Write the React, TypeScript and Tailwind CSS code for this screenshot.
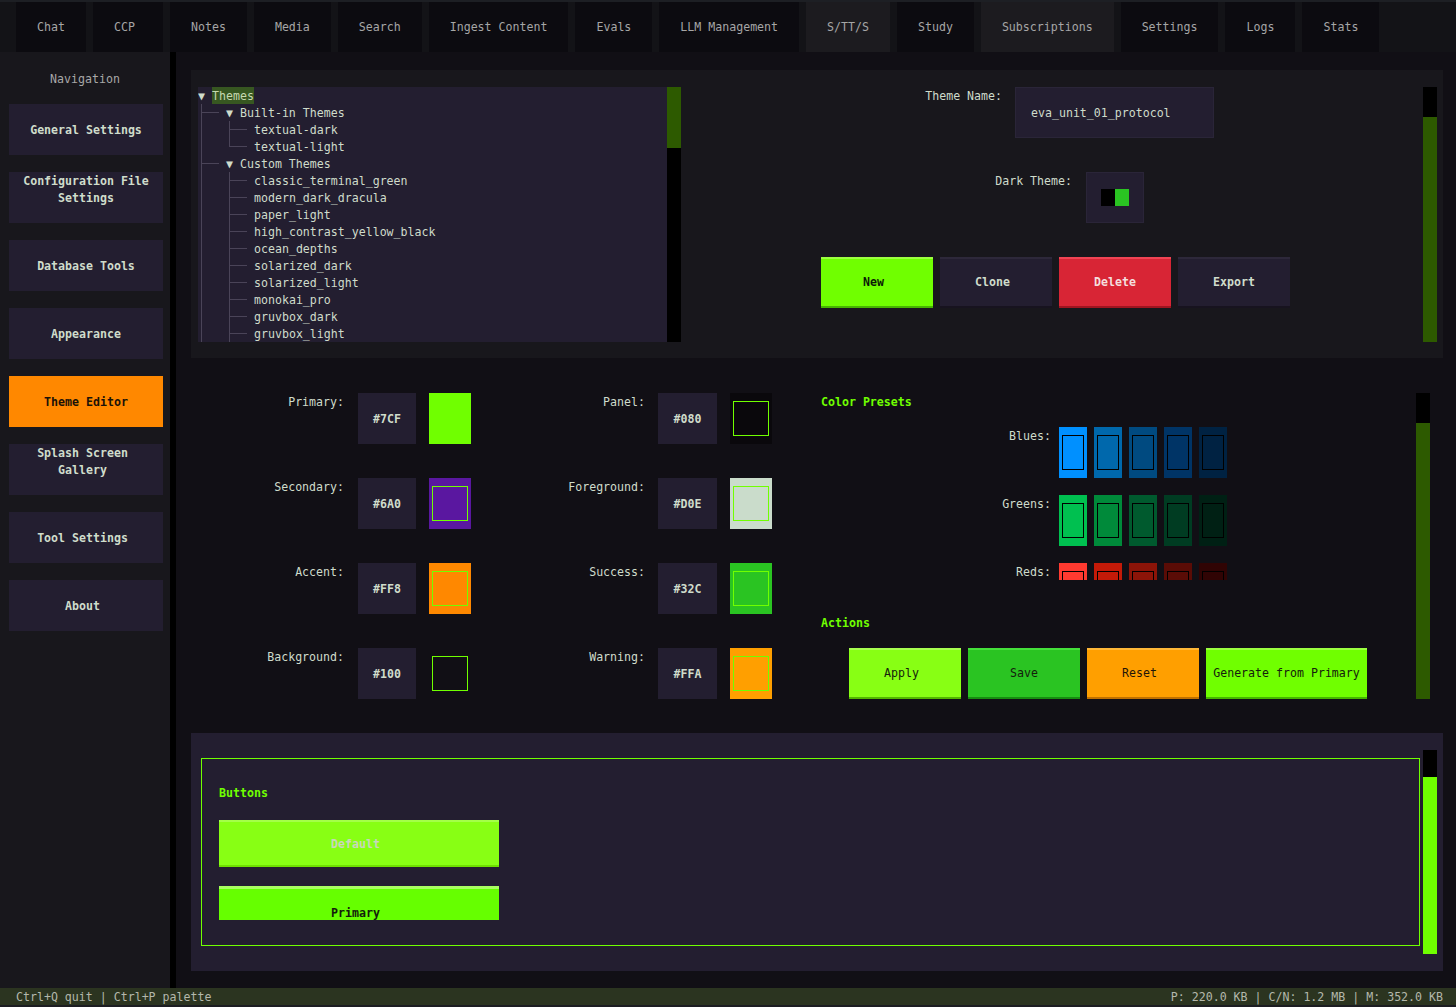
import React from 'react';

const mono = "font-['DejaVu_Sans_Mono','Liberation_Mono',monospace]";

const tabs = [
  'Chat',
  'CCP',
  'Notes',
  'Media',
  'Search',
  'Ingest Content',
  'Evals',
  'LLM Management',
  'S/TT/S',
  'Study',
  'Subscriptions',
  'Settings',
  'Logs',
  'Stats',
];
const activeTabs = ['S/TT/S', 'Subscriptions'];

const navItems = [
  { lines: ['General Settings'] },
  { lines: ['Configuration File', 'Settings'] },
  { lines: ['Database Tools'] },
  { lines: ['Appearance'] },
  { lines: ['Theme Editor'], active: true },
  { lines: ['Splash Screen', 'Gallery'] },
  { lines: ['Tool Settings'] },
  { lines: ['About'] },
];

type Guide = 'v' | 'tee' | 'end' | 'h' | 's';

const L1: Guide[] = ['tee', 'h', 'h', 's'];
const L2: Guide[] = ['v', 's', 's', 's', 'tee', 'h', 'h', 's'];
const L2end: Guide[] = ['v', 's', 's', 's', 'end', 'h', 'h', 's'];

const treeRows: { guides: Guide[]; label: string; toggle?: boolean; hl?: boolean }[] = [
  { guides: [], label: 'Themes', toggle: true, hl: true },
  { guides: L1, label: 'Built-in Themes', toggle: true },
  { guides: L2, label: 'textual-dark' },
  { guides: L2end, label: 'textual-light' },
  { guides: L1, label: 'Custom Themes', toggle: true },
  { guides: L2, label: 'classic_terminal_green' },
  { guides: L2, label: 'modern_dark_dracula' },
  { guides: L2, label: 'paper_light' },
  { guides: L2, label: 'high_contrast_yellow_black' },
  { guides: L2, label: 'ocean_depths' },
  { guides: L2, label: 'solarized_dark' },
  { guides: L2, label: 'solarized_light' },
  { guides: L2, label: 'monokai_pro' },
  { guides: L2, label: 'gruvbox_dark' },
  { guides: L2, label: 'gruvbox_light' },
];

const leftColors = [
  { label: 'Primary:', hex: '#7CF', sw: 'bg-[#70ff00]' },
  { label: 'Secondary:', hex: '#6A0', sw: 'bg-[#5a17a0]' },
  { label: 'Accent:', hex: '#FF8', sw: 'bg-[#ff8800]' },
  { label: 'Background:', hex: '#100', sw: 'bg-[#110f15]' },
];
const rightColors = [
  { label: 'Panel:', hex: '#080', sw: 'bg-[#0a080c]' },
  { label: 'Foreground:', hex: '#D0E', sw: 'bg-[#cadccb]' },
  { label: 'Success:', hex: '#32C', sw: 'bg-[#2ac422]' },
  { label: 'Warning:', hex: '#FFA', sw: 'bg-[#ff9f00]' },
];

const presets = [
  { label: 'Blues:', colors: ['bg-[#0090ff]', 'bg-[#0068ac]', 'bg-[#004a80]', 'bg-[#003466]', 'bg-[#002242]'] },
  { label: 'Greens:', colors: ['bg-[#00c050]', 'bg-[#008a3a]', 'bg-[#005a2e]', 'bg-[#003c22]', 'bg-[#002014]'] },
  { label: 'Reds:', colors: ['bg-[#ff3a30]', 'bg-[#c41a08]', 'bg-[#8c1408]', 'bg-[#5a0c06]', 'bg-[#300404]'] },
];

function GuideCell({ kind }: { kind: Guide }) {
  return (
    <span className="relative inline-block w-[7px] h-[17px] shrink-0">
      {(kind === 'v' || kind === 'tee') && <span className="absolute left-[3px] top-0 bottom-0 w-px bg-[#4a4458]" />}
      {kind === 'end' && <span className="absolute left-[3px] top-0 h-[9px] w-px bg-[#4a4458]" />}
      {(kind === 'tee' || kind === 'end') && <span className="absolute left-[3px] right-0 top-[8px] h-px bg-[#4a4458]" />}
      {kind === 'h' && <span className="absolute left-0 right-0 top-[8px] h-px bg-[#4a4458]" />}
    </span>
  );
}

// text with an odd number of cells in an even-width button sits half a cell left
function TuiButton({ label, cls, w = 'w-[112px]', shift = false }: { label: string; cls: string; w?: string; shift?: boolean }) {
  return (
    <div
      className={`${w} h-[51px] flex items-center justify-center border-t-2 border-b-2 font-bold ${cls} ${
        shift ? 'pr-[7px]' : ''
      }`}
    >
      {label}
    </div>
  );
}

function Swatch({ bg, border }: { bg: string; border: string }) {
  return (
    <div className={`w-[42px] h-[51px] px-[3px] py-[8px] ${bg}`}>
      <div className={`h-full border ${border}`} />
    </div>
  );
}

export default function App() {
  return (
    <div className={`w-[1456px] h-[1007px] bg-[#110f15] flex flex-col overflow-hidden text-[11.6px] leading-[17px] text-[#cfdccb] ${mono}`}>
      {/* tab bar */}
      <div className="h-[52px] shrink-0 bg-[#131317] border-t-2 border-[#1d1f24] flex gap-[7px] pl-[16px]">
        {tabs.map((t) => (
          <div
            key={t}
            className={`h-[50px] min-w-[70px] px-[21px] pt-px flex items-center justify-center text-[#a6a6a6] ${
              activeTabs.includes(t) ? 'bg-[#1c1b1f]' : 'bg-[#0c0b10]'
            } ${t === 'CCP' ? 'pr-[28px]' : ''}`}
          >
            {t}
          </div>
        ))}
      </div>

      <div className="flex-1 flex min-h-0">
        {/* sidebar */}
        <div className="w-[170px] shrink-0 bg-[#18171c] pt-[18px] flex flex-col">
          <div className="text-center text-[#a8a8a8] pt-px">Navigation</div>
          <div className="mt-[16px] flex flex-col gap-[17px] pl-[9px]">
            {navItems.map((n) => {
              const multi = n.lines.length > 1;
              const odd = n.lines[0].length % 2 === 1;
              return (
                <div
                  key={n.lines.join(' ')}
                  className={`w-[154px] h-[51px] pt-px flex flex-col font-bold ${multi ? 'justify-start' : 'justify-center'} ${
                    n.active ? 'bg-[#ff8800] text-[#1a1208]' : 'bg-[#231e30] text-[#cfdccb]'
                  } ${odd ? 'pr-[7px]' : ''}`}
                >
                  {n.lines.map((l) => (
                    <div key={l} className="text-center">
                      {l}
                    </div>
                  ))}
                </div>
              );
            })}
          </div>
        </div>
        <div className="w-[6px] shrink-0 bg-black" />

        {/* main */}
        <div className="flex-1 flex flex-col pt-[18px] pl-[15px] pr-[13px] pb-[17px]">
          {/* top panel */}
          <div className="h-[288px] shrink-0 bg-[#18171c] flex items-start pt-[17px]">
            <div className="ml-[7px] w-[469px] h-[255px] bg-[#231e30] overflow-hidden">
              {treeRows.map((r) => (
                <div key={r.label} className="flex h-[17px] whitespace-pre">
                  {r.guides.map((g, i) => (
                    <GuideCell key={i} kind={g} />
                  ))}
                  {r.toggle && <span className="w-[14px] shrink-0 pt-px">▼</span>}
                  <span className={r.hl ? 'bg-[#375721] text-[#c6d9b0] pt-px' : 'pt-px'}>{r.label}</span>
                </div>
              ))}
            </div>
            <div className="w-[14px] h-[255px] bg-black flex flex-col">
              <div className="h-[61px] bg-[#2d5a00]" />
            </div>

            <div className="flex-1 flex flex-col">
              <div className="flex items-start">
                <div className="w-[321px] text-right pt-px">Theme Name:</div>
                <div className="ml-[13px] w-[199px] h-[51px] bg-[#231e30] border border-[#2a2538] flex items-center pl-[15px] pt-px">
                  eva_unit_01_protocol
                </div>
              </div>
              <div className="flex items-start mt-[34px]">
                <div className="w-[391px] text-right pt-px">Dark Theme:</div>
                <div className="ml-[14px] w-[58px] h-[51px] bg-[#231e30] border border-[#2a2538] flex items-center justify-center">
                  <div className="w-[14px] h-[17px] bg-black" />
                  <div className="w-[14px] h-[17px] bg-[#2ac422]" />
                </div>
              </div>
              <div className="flex mt-[34px] ml-[140px] gap-[7px]">
                <TuiButton label="New" shift cls="bg-[#70ff00] border-t-[#9cff40] border-b-[#46b400] text-[#0c1a08]" />
                <TuiButton label="Clone" shift cls="bg-[#231e30] border-t-[#2d283a] border-b-[#17131f] text-[#cfdccb]" />
                <TuiButton label="Delete" cls="bg-[#d82535] border-t-[#f04454] border-b-[#a01420] text-[#f4dede]" />
                <TuiButton label="Export" cls="bg-[#231e30] border-t-[#2d283a] border-b-[#17131f] text-[#cfdccb]" />
              </div>
            </div>

            <div className="mr-[6px] w-[14px] h-[255px] bg-black flex flex-col">
              <div className="h-[30px]" />
              <div className="flex-1 bg-[#2d5a00]" />
            </div>
          </div>

          {/* color editing */}
          <div className="h-[375px] shrink-0 flex items-start pt-[35px]">
            <div className="w-[280px] flex flex-col gap-[34px]">
              {leftColors.map((c) => (
                <div key={c.label} className="flex items-start">
                  <div className="w-[153px] text-right pt-px">{c.label}</div>
                  <div className="ml-[14px] w-[58px] h-[51px] bg-[#231e30] flex items-center justify-center font-bold pt-px">{c.hex}</div>
                  <div className="ml-[13px]">
                    <Swatch bg={c.sw} border="border-[#70ff00]" />
                  </div>
                </div>
              ))}
            </div>
            <div className="w-[301px] flex flex-col gap-[34px]">
              {rightColors.map((c) => (
                <div key={c.label} className="flex items-start">
                  <div className="w-[174px] text-right pt-px">{c.label}</div>
                  <div className="ml-[13px] w-[59px] h-[51px] bg-[#231e30] flex items-center justify-center font-bold pt-px">{c.hex}</div>
                  <div className="ml-[13px]">
                    <Swatch bg={c.sw} border="border-[#70ff00]" />
                  </div>
                </div>
              ))}
            </div>

            <div className="flex-1 ml-[49px] flex flex-col">
              <div className="text-[#70ff00] font-bold h-[17px] pt-px">Color Presets</div>
              <div className="mt-[17px] h-[153px] overflow-hidden flex flex-col gap-[17px]">
                {presets.map((p) => (
                  <div key={p.label} className="flex items-start shrink-0">
                    <div className="w-[230px] text-right pt-px">{p.label}</div>
                    <div className="ml-[8px] flex gap-[7px]">
                      {p.colors.map((c) => (
                        <div key={c} className={`w-[28px] h-[51px] px-[3px] py-[8px] ${c}`}>
                          <div className="h-full border border-black" />
                        </div>
                      ))}
                    </div>
                  </div>
                ))}
              </div>
              <div className="mt-[34px] text-[#70ff00] font-bold h-[17px] pt-px">Actions</div>
              <div className="mt-[17px] ml-[28px] flex gap-[7px]">
                <TuiButton label="Apply" shift cls="bg-[#88ff14] border-t-[#a8ff50] border-b-[#52b400] text-[#15200d] !font-normal" />
                <TuiButton label="Save" cls="bg-[#2ac422] border-t-[#44e03a] border-b-[#178c10] text-[#15200d] !font-normal" />
                <TuiButton label="Reset" shift cls="bg-[#ff9f00] border-t-[#ffb838] border-b-[#c07000] text-[#1f1508] !font-normal" />
                <TuiButton
                  label="Generate from Primary"
                  w="w-[161px]"
                  cls="bg-[#70ff00] border-t-[#9cff40] border-b-[#46b400] text-[#15200d] !font-normal"
                />
              </div>
            </div>

            <div className="mr-[13px] w-[14px] h-[306px] bg-black flex flex-col">
              <div className="h-[30px]" />
              <div className="flex-1 bg-[#2d5a00]" />
            </div>
          </div>

          {/* preview panel */}
          <div className="h-[238px] shrink-0 bg-[#231e30] flex items-start pt-[17px] pl-[10px]">
            <div className="mt-[8px] w-[1219px] h-[188px] border border-[#70ff00]">
              <div className="h-[161px] overflow-hidden pl-[17px] pt-[25px]">
                <div className="text-[#70ff00] font-bold h-[17px] pt-px">Buttons</div>
                <div className="mt-[19px] w-[280px] h-[47px] bg-[#88ff14] border-t-2 border-b-2 border-t-[#a4ff48] border-b-[#6ee000] flex items-center justify-center pr-[7px] pt-px font-bold text-[#c8d6bc]">
                  Default
                </div>
                <div className="mt-[19px] w-[280px] h-[51px] bg-[#66ff00] border-t-[3px] border-t-[#a8ff60] flex items-center justify-center pr-[7px] pt-px font-bold text-[#14200c]">
                  Primary
                </div>
              </div>
            </div>
            <div className="ml-[3px] w-[14px] h-[204px] bg-black flex flex-col">
              <div className="h-[27px]" />
              <div className="flex-1 bg-[#70ff00]" />
            </div>
          </div>
        </div>
      </div>

      {/* status bar */}
      <div className="h-[17px] shrink-0 bg-[#2b3420] flex justify-between pl-[16px] pr-[13px] pt-px text-[#b4b8ac]">
        <span>Ctrl+Q quit | Ctrl+P palette</span>
        <span>P: 220.0 KB | C/N: 1.2 MB | M: 352.0 KB</span>
      </div>
      <div className="h-[2px] shrink-0 bg-[#1c1d22]" />
    </div>
  );
}
